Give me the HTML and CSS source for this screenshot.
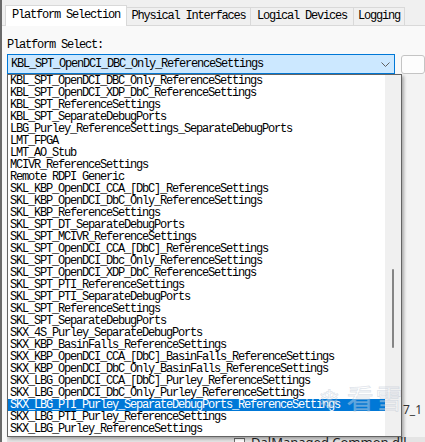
FILE: index.html
```html
<!DOCTYPE html>
<html lang="en">
<head>
    <meta charset="UTF-8">
    <meta name="viewport" content="width=device-width, initial-scale=1.0">
    <title>Platform Selection</title>
    <link rel="stylesheet" href="styles.css">
</head>
<body>
    <div class="window">
        <div class="tabs">
            <div class="tab tab-active tab-platform">Platform Selection</div>
            <div class="tab tab-physical">Physical Interfaces</div>
            <div class="tab tab-logical">Logical Devices</div>
            <div class="tab tab-logging">Logging</div>
        </div>
        <div class="panel">
            <div class="field-label">Platform Select:</div>
            <div class="combo-row">
                <div class="combo">
                    <span class="combo-text">KBL_SPT_OpenDCI_DBC_Only_ReferenceSettings</span>
                    <svg class="chevron" width="9" height="5" viewBox="0 0 9 5">
                        <path d="M0.5 0.5 L4.5 4.5 L8.5 0.5" fill="none" stroke="#5f5f5f" stroke-width="1"/>
                    </svg>
                </div>
                <div class="side-btn"></div>
            </div>
            <div class="drop-row">
                <div class="dropdown">
                    <ul class="options">
                        <li>KBL_SPT_OpenDCI_DBC_Only_ReferenceSettings</li>
                        <li>KBL_SPT_OpenDCI_XDP_DbC_ReferenceSettings</li>
                        <li>KBL_SPT_ReferenceSettings</li>
                        <li>KBL_SPT_SeparateDebugPorts</li>
                        <li>LBG_Purley_ReferenceSettings_SeparateDebugPorts</li>
                        <li>LMT_FPGA</li>
                        <li>LMT_AO_Stub</li>
                        <li>MCIVR_ReferenceSettings</li>
                        <li>Remote RDPI Generic</li>
                        <li>SKL_KBP_OpenDCI_CCA_[DbC]_ReferenceSettings</li>
                        <li>SKL_KBP_OpenDCI_DbC_Only_ReferenceSettings</li>
                        <li>SKL_KBP_ReferenceSettings</li>
                        <li>SKL_SPT_DT_SeparateDebugPorts</li>
                        <li>SKL_SPT_MCIVR_ReferenceSettings</li>
                        <li>SKL_SPT_OpenDCI_CCA_[DbC]_ReferenceSettings</li>
                        <li>SKL_SPT_OpenDCI_Dbc_Only_ReferenceSettings</li>
                        <li>SKL_SPT_OpenDCI_XDP_DbC_ReferenceSettings</li>
                        <li>SKL_SPT_PTI_ReferenceSettings</li>
                        <li>SKL_SPT_PTI_SeparateDebugPorts</li>
                        <li>SKL_SPT_ReferenceSettings</li>
                        <li>SKL_SPT_SeparateDebugPorts</li>
                        <li>SKX_4S_Purley_SeparateDebugPorts</li>
                        <li>SKX_KBP_BasinFalls_ReferenceSettings</li>
                        <li>SKX_KBP_OpenDCI_CCA_[DbC]_BasinFalls_ReferenceSettings</li>
                        <li>SKX_KBP_OpenDCI_DbC_Only_BasinFalls_ReferenceSettings</li>
                        <li>SKX_LBG_OpenDCI_CCA_[DbC]_Purley_ReferenceSettings</li>
                        <li>SKX_LBG_OpenDCI_DbC_Only_Purley_ReferenceSettings</li>
                        <li class="selected">SKX_LBG_PTI_Purley_SeparateDebugPorts_ReferenceSettings</li>
                        <li>SKX_LBG_PTI_Purley_ReferenceSettings</li>
                        <li>SKX_LBG_Purley_ReferenceSettings</li>
                    </ul>
                    <div class="scrollbar"><div class="thumb"></div></div>
                </div>
                <div class="behind">
                    <span class="behind-text">7_1</span>
                </div>
            </div>
            <div class="under">
                <span class="file-icon"></span>
                <span class="under-text">DalManaged Common.dll</span>
            </div>
        </div>
        <div class="watermark"><span class="flake">&#10052;</span>看雪</div>
    </div>
</body>
</html>
```

FILE: styles.css
```css
body {
  margin: 0;
  background: #f0f0f0;
  font-family: "Liberation Mono", "DejaVu Sans Mono", monospace;
  font-size: 12px;
  letter-spacing: -1.2px;
  color: #000;
}
.window {
  position: relative;
  width: 425px;
  height: 442px;
  overflow: hidden;
  border-left: 2px solid #6a6a6a;
  box-sizing: border-box;
  background: #f0f0f0;
}

/* tab strip */
.tabs {
  display: flex;
  align-items: flex-end;
  height: 26px;
  padding-left: 3px;
  border-bottom: 1px solid #d9d9d9;
  box-sizing: border-box;
  background: #f0f0f0;
}
.tab {
  box-sizing: border-box;
  height: 18px;
  line-height: 16px;
  border: 1px solid #d9d9d9;
  border-bottom: none;
  background: #f0f0f0;
  text-align: center;
  white-space: nowrap;
}
.tab-active {
  height: 21px;
  line-height: 18px;
  margin-bottom: -1px;
  background: #ffffff;
  position: relative;
}
.tab-platform { width: 122px; }
.tab-physical { width: 124px; border-left: none; }
.tab-logical { width: 103px; border-left: none; }
.tab-logging { width: 51px; border-left: none; }

/* panel */
.panel {
  background: #f9f9f9;
  padding-left: 5px;
  height: 416px;
}
.field-label {
  padding-top: 13px;
  line-height: 12px;
}
.combo-row {
  display: flex;
  margin-top: 3px;
}
.combo {
  box-sizing: border-box;
  width: 395px;
  height: 20px;
  border: 1px solid #0078d7;
  background: #cce8ff;
  display: flex;
  align-items: center;
  padding-left: 3px;
  padding-right: 4px;
}
.combo-text {
  flex: 1;
  line-height: 18px;
  white-space: nowrap;
}
.chevron {
  margin-top: 1px;
}
.side-btn {
  box-sizing: border-box;
  margin-left: 6px;
  margin-top: 1px;
  width: 24px;
  height: 19px;
  border: 1px solid #c4c4c4;
  border-radius: 3px;
  background: #fdfdfd;
}

/* dropdown list */
.drop-row {
  display: flex;
}
.dropdown {
  display: flex;
  box-sizing: border-box;
  width: 395px;
  height: 363px;
  border: 1px solid #646464;
  background: #ffffff;
  box-shadow: 2px 2px 3px rgba(0, 0, 0, 0.3);
  position: relative;
  z-index: 1;
}
.options {
  list-style: none;
  margin: 0;
  padding: 0;
  width: 377px;
  overflow: hidden;
}
.options li {
  height: 12px;
  line-height: 12px;
  padding-left: 2px;
  white-space: nowrap;
  overflow: hidden;
}
.options li.selected {
  background: #0078d7;
  color: #ffffff;
}
.scrollbar {
  width: 16px;
  background: #f0f0f0;
}
.thumb {
  width: 2px;
  height: 79px;
  margin: 194px 0 0 7px;
  border-radius: 1px;
  background: #858585;
}
.behind {
  flex: 1;
  background: #f3f3f3;
  font-family: "Noto Sans", "Liberation Sans", sans-serif;
  letter-spacing: 0;
}
.behind-text {
  display: block;
  margin-top: 329px;
  padding-left: 1px;
  color: #333;
  font-size: 12px;
  line-height: 14px;
}

/* window underneath */
.under {
  display: flex;
  align-items: flex-start;
  gap: 6px;
  height: 6px;
  padding-left: 227px;
  background: #e4e4e4;
  font-family: "Noto Sans", "Liberation Sans", sans-serif;
  letter-spacing: 0;
  overflow: hidden;
}
.file-icon {
  width: 11px;
  height: 11px;
  margin-top: 1px;
  box-sizing: border-box;
  border: 1px solid #6b6b6b;
  background: #ffffff;
}
.under-text {
  font-size: 13px;
  line-height: 13px;
  margin-top: -1px;
  color: #222;
}

/* faint watermark over the list */
.watermark {
  position: absolute;
  left: 316px;
  top: 382px;
  z-index: 2;
  font-family: "Noto Sans CJK SC", sans-serif;
  font-size: 27px;
  line-height: 32px;
  letter-spacing: 2px;
  color: rgba(255, 255, 255, 0.35);
  -webkit-text-stroke: 0.8px rgba(160, 175, 195, 0.35);
  white-space: nowrap;
}
.flake {
  font-family: "DejaVu Sans", sans-serif;
  margin-right: 4px;
}
```
